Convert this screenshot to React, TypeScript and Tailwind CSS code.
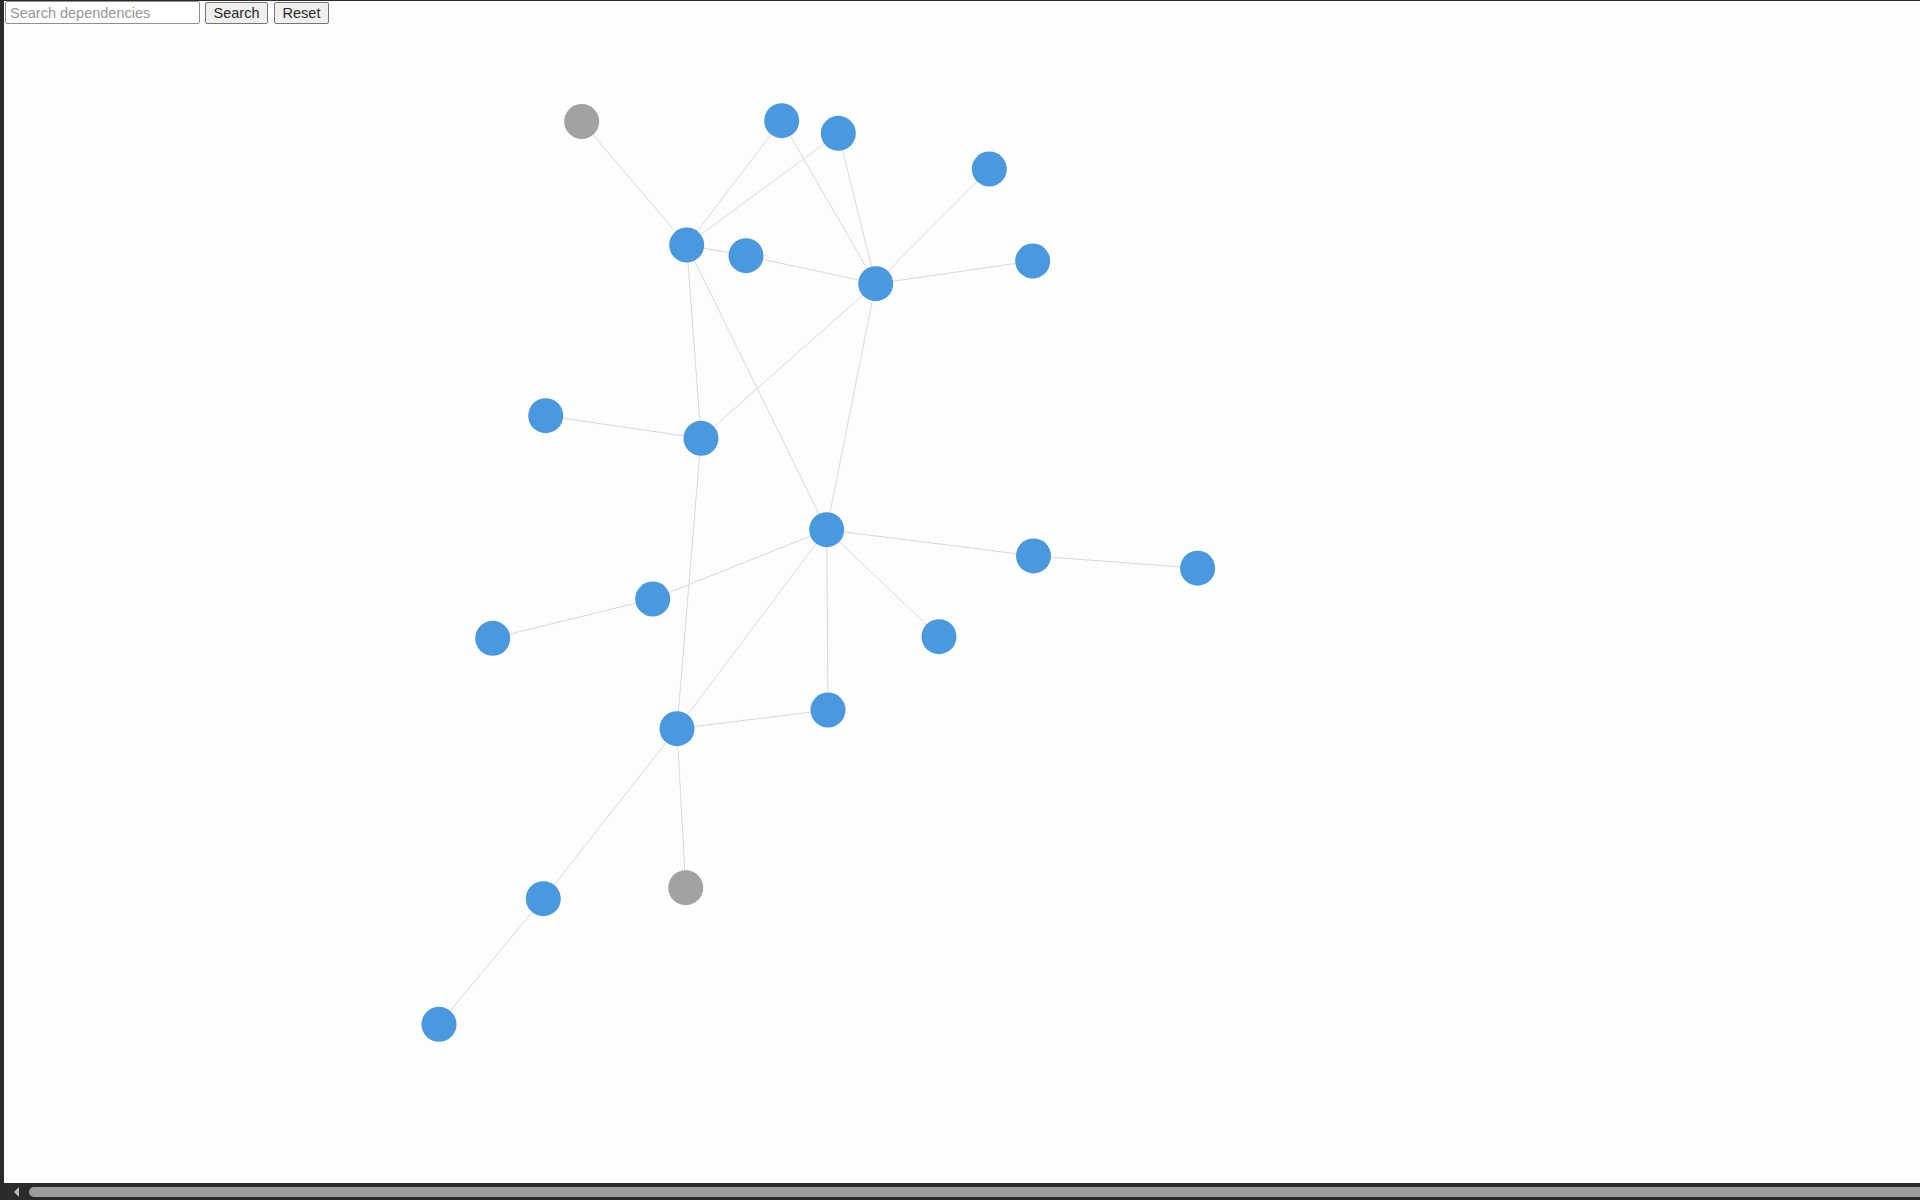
import React from 'react';

// Dependency graph viewer — static snapshot of the force layout

type Node = { id: number; x: number; y: number; missing?: boolean };

const NODES: Node[] = [
  { id: 1, x: 581.7, y: 121.5, missing: true },
  { id: 2, x: 781.7, y: 120.7 },
  { id: 3, x: 838.3, y: 133.3 },
  { id: 4, x: 989.3, y: 169 },
  { id: 5, x: 686.7, y: 245 },
  { id: 6, x: 746, y: 255.7 },
  { id: 7, x: 875.7, y: 283.7 },
  { id: 8, x: 1032.7, y: 261 },
  { id: 9, x: 545.7, y: 415.7 },
  { id: 10, x: 701, y: 438.3 },
  { id: 11, x: 826.7, y: 529.7 },
  { id: 12, x: 1033.5, y: 555.9 },
  { id: 13, x: 1197.6, y: 568.2 },
  { id: 14, x: 652.7, y: 599 },
  { id: 15, x: 492.7, y: 638.3 },
  { id: 16, x: 939, y: 636.7 },
  { id: 17, x: 828, y: 710 },
  { id: 18, x: 677, y: 728.7 },
  { id: 19, x: 543.3, y: 898.7 },
  { id: 20, x: 685.7, y: 887.7, missing: true },
  { id: 21, x: 439, y: 1024.3 },
];

const LINKS: [number, number][] = [
  [1, 5], [2, 5], [3, 5], [2, 7], [3, 7], [4, 7], [5, 6], [6, 7], [8, 7],
  [7, 10], [7, 11], [5, 10], [5, 11], [9, 10], [10, 18], [11, 12], [12, 13],
  [11, 14], [14, 15], [11, 16], [11, 17], [11, 18], [18, 17], [18, 19],
  [18, 20], [19, 21],
];

const byId = (id: number) => NODES.find((n) => n.id === id)!;

const App: React.FC = () => {
  return (
    <div className="flex h-[1200px] w-[1920px] flex-col overflow-hidden bg-[#2b2b2b] pl-[4px] pt-[1px] font-['Liberation_Sans',Arial,sans-serif]">
      <div className="flex flex-1 flex-col bg-[#fdfdfb]">
        {/* Controls */}
        <div className="flex h-[24px] items-start pl-[1px]">
          <input
            type="text"
            placeholder="Search dependencies"
            className="h-[23px] w-[195px] rounded-[2px] border border-[#8f8f8f] bg-white px-[4px] text-[14.5px] text-[#222] outline-none placeholder:text-[#969696]"
          />
          <button className="ml-[5px] mt-[1px] h-[22px] w-[63px] rounded-[2px] border border-[#767676] bg-[#efefef] text-[14.5px] leading-none text-[#2a2a2a]">
            Search
          </button>
          <button className="ml-[6px] mt-[1px] h-[22px] w-[55px] rounded-[2px] border border-[#767676] bg-[#efefef] text-[14.5px] leading-none text-[#2a2a2a]">
            Reset
          </button>
        </div>

        {/* Graph canvas */}
        <svg className="block flex-1" width="1916" height="1158">
          <g transform="translate(-4,-25)">
            {LINKS.map(([a, b], i) => {
              const s = byId(a);
              const t = byId(b);
              return (
                <line
                  key={i}
                  x1={s.x}
                  y1={s.y}
                  x2={t.x}
                  y2={t.y}
                  stroke="#d8d8de"
                  strokeWidth={1}
                />
              );
            })}
            {NODES.map((n) => (
              <circle
                key={n.id}
                cx={n.x}
                cy={n.y}
                r={17.5}
                fill={n.missing ? '#a2a2a2' : '#4a98dd'}
              />
            ))}
          </g>
        </svg>
      </div>

      {/* Horizontal scrollbar */}
      <div className="flex h-[17px] items-center bg-[#2b2b2b] pl-[10px]">
        <span className="h-0 w-0 border-y-[5px] border-r-[5px] border-y-transparent border-r-[#bdbdbd]" />
        <div className="ml-[10px] h-[10px] flex-1 rounded-l-[5px] bg-[#9c9c9c]" />
      </div>
    </div>
  );
};

export default App;
